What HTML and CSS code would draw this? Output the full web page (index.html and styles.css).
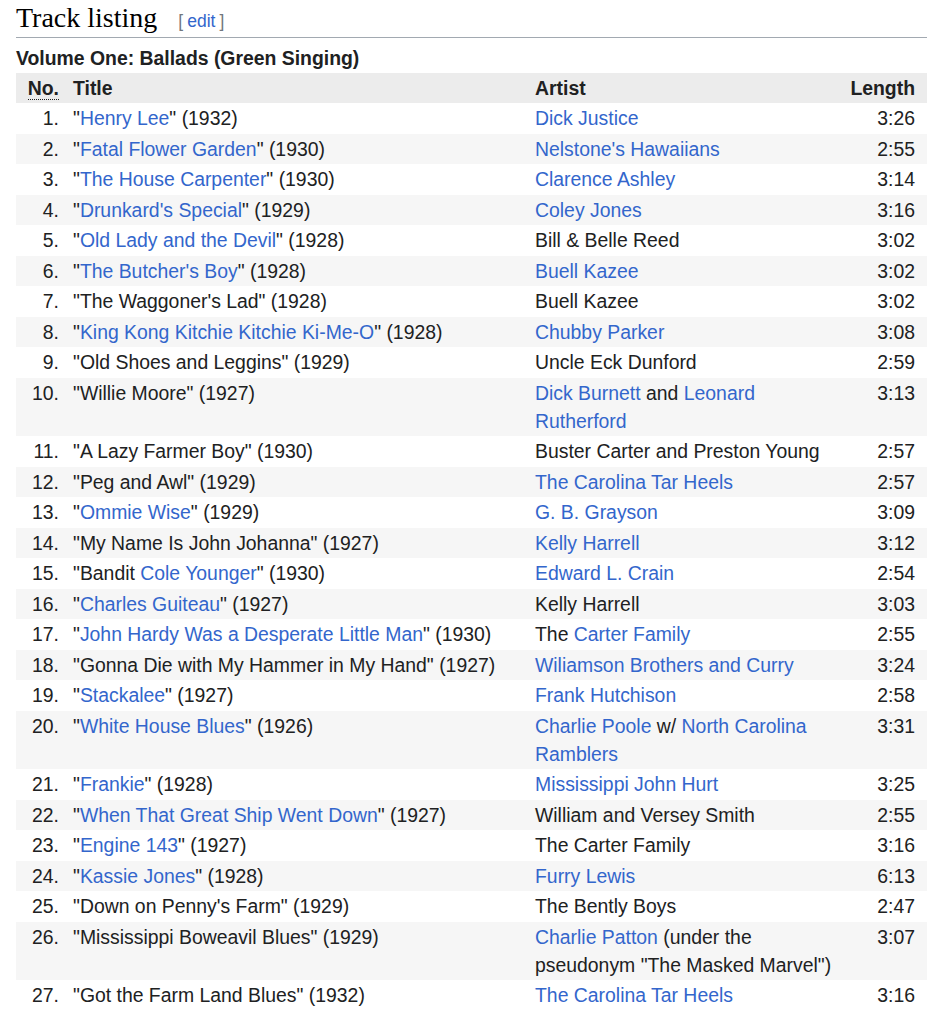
FILE: index.html
```html
<!DOCTYPE html>
<html lang="en">
<head>
<meta charset="utf-8">
<title>Track listing</title>
<link rel="stylesheet" href="styles.css">
</head>
<body>
<div class="section">
  <h2 class="heading"><span class="heading-text">Track listing</span><span class="edit-section"><span class="bracket">[</span><a href="#">edit</a><span class="bracket">]</span></span></h2>
  <div class="volume">Volume One: Ballads (Green Singing)</div>
  <table class="tracklist">
    <colgroup>
      <col class="c-no"><col class="c-title"><col class="c-artist"><col class="c-len">
    </colgroup>
    <thead>
      <tr><th class="no"><abbr title="Number">No.</abbr></th><th class="title">Title</th><th class="artist">Artist</th><th class="len">Length</th></tr>
    </thead>
    <tbody>
      <tr><td class="no">1.</td><td>"<a href="#">Henry Lee</a>" (1932)</td><td><a href="#">Dick Justice</a></td><td class="len">3:26</td></tr>
      <tr><td class="no">2.</td><td>"<a href="#">Fatal Flower Garden</a>" (1930)</td><td><a href="#">Nelstone's Hawaiians</a></td><td class="len">2:55</td></tr>
      <tr><td class="no">3.</td><td>"<a href="#">The House Carpenter</a>" (1930)</td><td><a href="#">Clarence Ashley</a></td><td class="len">3:14</td></tr>
      <tr><td class="no">4.</td><td>"<a href="#">Drunkard's Special</a>" (1929)</td><td><a href="#">Coley Jones</a></td><td class="len">3:16</td></tr>
      <tr><td class="no">5.</td><td>"<a href="#">Old Lady and the Devil</a>" (1928)</td><td>Bill &amp; Belle Reed</td><td class="len">3:02</td></tr>
      <tr><td class="no">6.</td><td>"<a href="#">The Butcher's Boy</a>" (1928)</td><td><a href="#">Buell Kazee</a></td><td class="len">3:02</td></tr>
      <tr><td class="no">7.</td><td>"The Waggoner's Lad" (1928)</td><td>Buell Kazee</td><td class="len">3:02</td></tr>
      <tr><td class="no">8.</td><td>"<a href="#">King Kong Kitchie Kitchie Ki-Me-O</a>" (1928)</td><td><a href="#">Chubby Parker</a></td><td class="len">3:08</td></tr>
      <tr><td class="no">9.</td><td>"Old Shoes and Leggins" (1929)</td><td>Uncle Eck Dunford</td><td class="len">2:59</td></tr>
      <tr><td class="no">10.</td><td>"Willie Moore" (1927)</td><td><a href="#">Dick Burnett</a> and <a href="#">Leonard Rutherford</a></td><td class="len">3:13</td></tr>
      <tr><td class="no">11.</td><td>"A Lazy Farmer Boy" (1930)</td><td>Buster Carter and Preston Young</td><td class="len">2:57</td></tr>
      <tr><td class="no">12.</td><td>"Peg and Awl" (1929)</td><td><a href="#">The Carolina Tar Heels</a></td><td class="len">2:57</td></tr>
      <tr><td class="no">13.</td><td>"<a href="#">Ommie Wise</a>" (1929)</td><td><a href="#">G. B. Grayson</a></td><td class="len">3:09</td></tr>
      <tr><td class="no">14.</td><td>"My Name Is John Johanna" (1927)</td><td><a href="#">Kelly Harrell</a></td><td class="len">3:12</td></tr>
      <tr><td class="no">15.</td><td>"Bandit <a href="#">Cole Younger</a>" (1930)</td><td><a href="#">Edward L. Crain</a></td><td class="len">2:54</td></tr>
      <tr><td class="no">16.</td><td>"<a href="#">Charles Guiteau</a>" (1927)</td><td>Kelly Harrell</td><td class="len">3:03</td></tr>
      <tr><td class="no">17.</td><td>"<a href="#">John Hardy Was a Desperate Little Man</a>" (1930)</td><td>The <a href="#">Carter Family</a></td><td class="len">2:55</td></tr>
      <tr><td class="no">18.</td><td>"Gonna Die with My Hammer in My Hand" (1927)</td><td><a href="#">Wiliamson Brothers and Curry</a></td><td class="len">3:24</td></tr>
      <tr><td class="no">19.</td><td>"<a href="#">Stackalee</a>" (1927)</td><td><a href="#">Frank Hutchison</a></td><td class="len">2:58</td></tr>
      <tr><td class="no">20.</td><td>"<a href="#">White House Blues</a>" (1926)</td><td><a href="#">Charlie Poole</a> w/ <a href="#">North Carolina Ramblers</a></td><td class="len">3:31</td></tr>
      <tr><td class="no">21.</td><td>"<a href="#">Frankie</a>" (1928)</td><td><a href="#">Mississippi John Hurt</a></td><td class="len">3:25</td></tr>
      <tr><td class="no">22.</td><td>"<a href="#">When That Great Ship Went Down</a>" (1927)</td><td>William and Versey Smith</td><td class="len">2:55</td></tr>
      <tr><td class="no">23.</td><td>"<a href="#">Engine 143</a>" (1927)</td><td>The Carter Family</td><td class="len">3:16</td></tr>
      <tr><td class="no">24.</td><td>"<a href="#">Kassie Jones</a>" (1928)</td><td><a href="#">Furry Lewis</a></td><td class="len">6:13</td></tr>
      <tr><td class="no">25.</td><td>"Down on Penny's Farm" (1929)</td><td>The Bently Boys</td><td class="len">2:47</td></tr>
      <tr><td class="no">26.</td><td>"Mississippi Boweavil Blues" (1929)</td><td><a href="#">Charlie Patton</a> (under the pseudonym "The Masked Marvel")</td><td class="len">3:07</td></tr>
      <tr><td class="no">27.</td><td>"Got the Farm Land Blues" (1932)</td><td><a href="#">The Carolina Tar Heels</a></td><td class="len">3:16</td></tr>
    </tbody>
  </table>
</div>
</body>
</html>
```
FILE: styles.css
```css
html, body {
  margin: 0;
  padding: 0;
  background: #ffffff;
}

body {
  color: #202122;
  font-family: "Liberation Sans", Arial, sans-serif;
  font-size: 19.4px;
  line-height: 28px;
}

a {
  color: #3366cc;
  text-decoration: none;
}

.section {
  padding: 0 11px 0 16px;
}

.heading {
  margin: 0;
  padding: 2px 0 4px 0;
  border-bottom: 1px solid #a2a9b1;
  font-family: "Liberation Serif", Georgia, "DejaVu Serif", serif;
  font-weight: normal;
  font-size: 28px;
  line-height: 31px;
  height: 31px;
  display: flex;
  align-items: baseline;
}

.heading-text {
  color: #000000;
}

.edit-section {
  margin-left: 21px;
  font-family: "Liberation Sans", Arial, sans-serif;
  font-size: 17.5px;
  line-height: 1;
  display: inline-flex;
  align-items: baseline;
  gap: 4px;
}

.edit-section .bracket {
  color: #72777d;
}

.volume {
  font-weight: bold;
  margin-top: 6px;
  line-height: 28px;
}

.tracklist {
  width: 911px;
  border-collapse: collapse;
  border-spacing: 0;
  table-layout: fixed;
  margin-top: 1px;
}

.c-no { width: 50px; }
.c-title { width: 462px; }
.c-artist { width: 314px; }
.c-len { width: 85px; }

.tracklist th,
.tracklist td {
  padding: 1.25px 7px;
  vertical-align: top;
  text-align: left;
}

.tracklist thead tr {
  background: #ececec;
}

.tracklist th {
  font-weight: bold;
  padding-top: 1px;
  padding-bottom: 1px;
}

.tracklist .no {
  text-align: right;
  padding-right: 7px;
}

.tracklist .len {
  text-align: right;
  padding-right: 12px;
}

.tracklist abbr {
  text-decoration: none;
  border-bottom: 1px dotted #202122;
}

.tracklist tbody tr:nth-child(even) {
  background: #f6f6f6;
}
```
